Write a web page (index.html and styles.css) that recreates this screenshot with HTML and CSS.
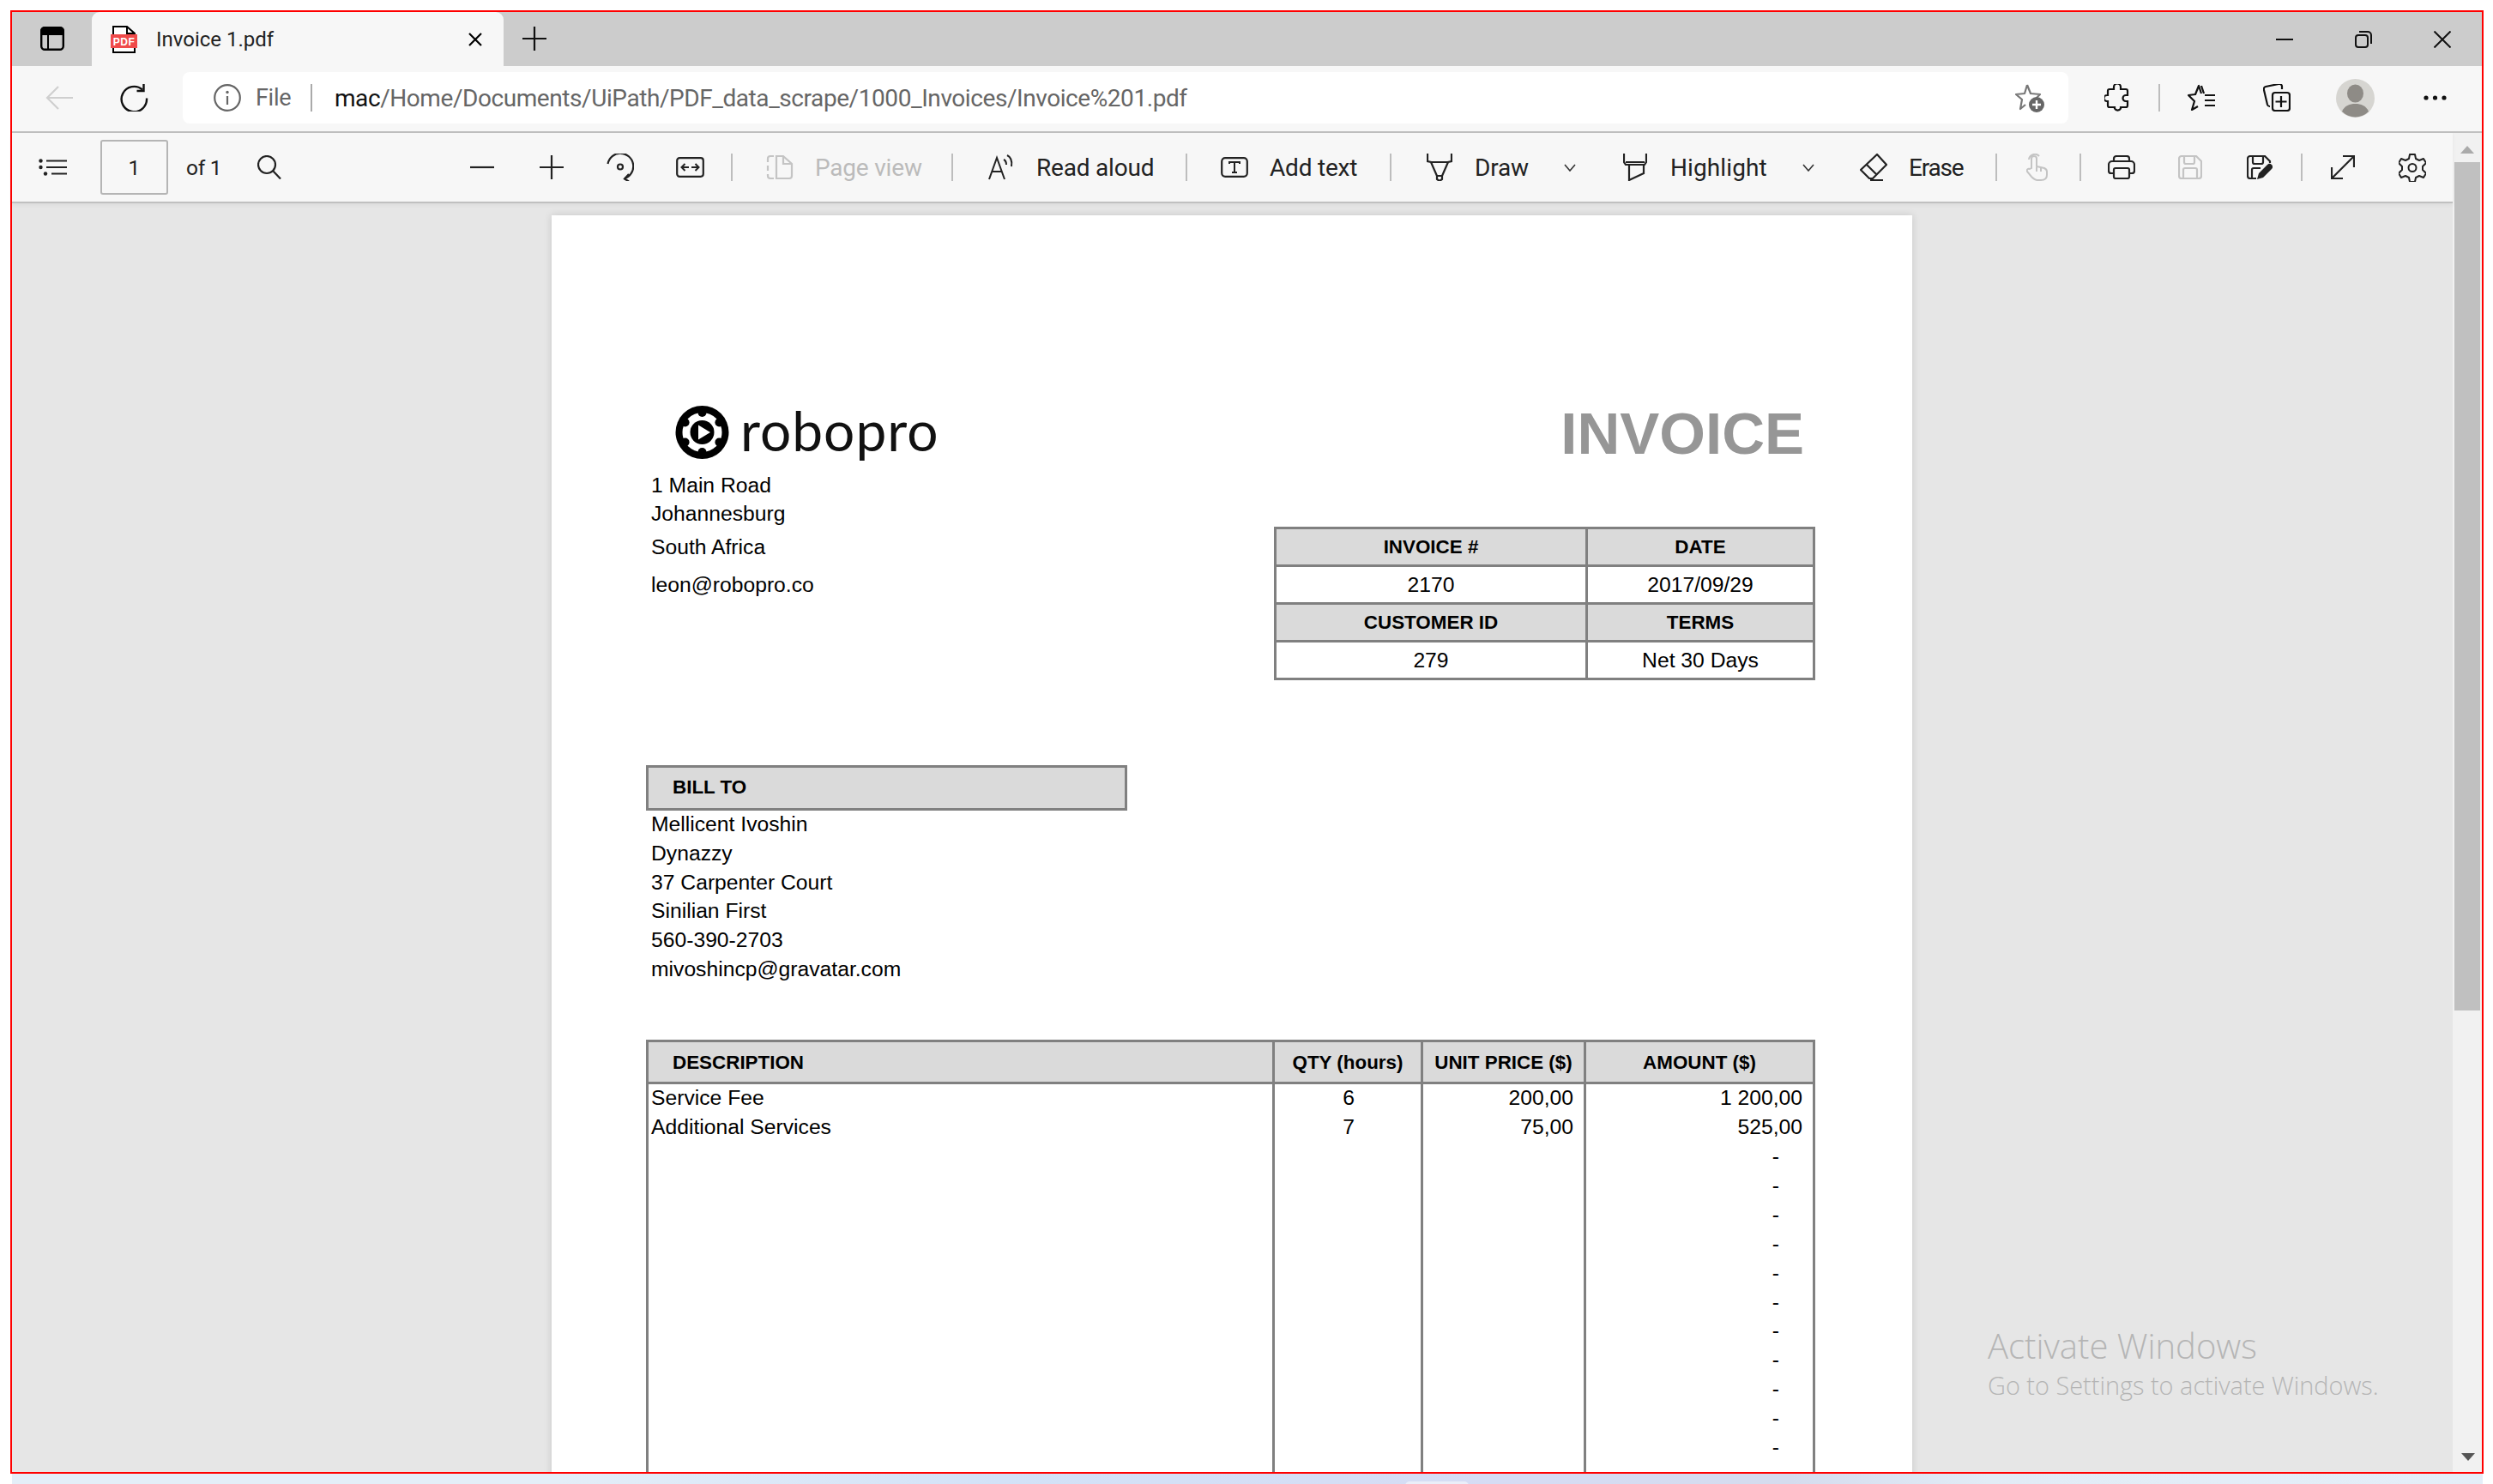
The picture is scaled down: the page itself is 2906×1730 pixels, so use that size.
FILE: index.html
```html
<!DOCTYPE html>
<html lang="en">
<head>
    <meta charset="UTF-8">
    <title>Invoice 1.pdf</title>
    <link rel="stylesheet" href="styles.css">
</head>
<body>

<div class="frame">

    <!-- tab strip -->
    <div class="tabstrip">
        <svg class="ic-vtabs" width="28" height="28" viewBox="0 0 28 28"><rect x="1.2" y="1.2" width="25.6" height="25.6" rx="4" fill="none" stroke="#000" stroke-width="2.4"/><path d="M1 5a4 4 0 0 1 4-4h18a4 4 0 0 1 4 4v4H1zM9 8v19" fill="#000" stroke="#000" stroke-width="2"/></svg>
        <div class="tab">
            <svg class="ic-pdf" width="31" height="32" viewBox="0 0 31 32"><path d="M3 1h16l9 8v22H3z" fill="#fff" stroke="#000" stroke-width="2"/><path d="M19 1v8h9" fill="none" stroke="#000" stroke-width="2"/><rect x="0" y="10" width="31" height="16" fill="#f04a4a"/><text x="15.5" y="22.5" class="pdf-word">PDF</text></svg>
            <span class="tab-title">Invoice 1.pdf</span>
            <svg class="ic-tabclose" width="16" height="16" viewBox="0 0 16 16"><path d="M1 1l14 14M15 1L1 15" stroke="#000" stroke-width="2.2" fill="none"/></svg>
        </div>
        <svg class="ic-newtab" width="28" height="28" viewBox="0 0 28 28"><path d="M14 0v28M0 14h28" stroke="#111" stroke-width="2.2"/></svg>
        <div class="winctl">
            <svg width="20" height="20" viewBox="0 0 20 20"><path d="M0 10h20" stroke="#111" stroke-width="2"/></svg>
            <svg width="20" height="20" viewBox="0 0 20 20"><rect x="1" y="5" width="14" height="14" rx="3" fill="none" stroke="#111" stroke-width="2"/><path d="M5 1h10a4 4 0 0 1 4 4v10" fill="none" stroke="#111" stroke-width="2"/></svg>
            <svg width="20" height="20" viewBox="0 0 20 20"><path d="M0.5 0.5l19 19M19.5 0.5l-19 19" stroke="#111" stroke-width="2" fill="none"/></svg>
        </div>
    </div>

    <!-- address row -->
    <div class="navbar">
        <svg class="ic-back" width="32" height="28" viewBox="0 0 32 28"><path d="M32 14H2M15 1L2 14l13 13" fill="none" stroke="#cfcfcf" stroke-width="2.2"/></svg>
        <svg class="ic-reload" width="33" height="32" viewBox="0 0 33 32"><path d="M26 6.5A14.7 14.7 0 1 0 31 16.500" fill="none" stroke="#111" stroke-width="2.4"/><path d="M27.500 0v8h-8" fill="none" stroke="#111" stroke-width="2.400"/></svg>
        <div class="addressbar">
            <svg class="ic-info" width="32" height="32" viewBox="0 0 32 32"><circle cx="16" cy="16" r="14.800" fill="none" stroke="#666" stroke-width="2.200"/><path d="M16 14v10" stroke="#666" stroke-width="2.200"/><circle cx="16" cy="9.500" r="1.700" fill="#666"/></svg>
            <span class="addr-file">File</span>
            <span class="addr-sep"></span>
            <span class="addr-url"><span class="addr-host">mac</span>/Home/Documents/UiPath/PDF_data_scrape/1000_Invoices/Invoice%201.pdf</span>
            <svg class="ic-staradd" width="34" height="34" viewBox="0 0 34 34"><path d="M14 2l4 10 11 1-6 6M12 25l-6 5 2-11-7-6 10-1 3-10" fill="none" stroke="#777" stroke-width="2.200" stroke-linejoin="round"/><circle cx="25" cy="25" r="9" fill="#666"/><path d="M25 20v10M20 25h10" stroke="#fff" stroke-width="2.400"/></svg>
        </div>
        <svg class="ic-puzzle" width="30" height="32" viewBox="0 0 30 32"><path d="M11 3.500a4 4 0 0 1 8 0V6h6a2 2 0 0 1 2 2v5h-2a3.500 3.500 0 0 0 0 7h2v5a2 2 0 0 1-2 2h-6v1.500a4 4 0 0 1-7 0V27H6a2 2 0 0 1-2-2v-5H3a3.500 3.500 0 0 1 0-7h1V8a2 2 0 0 1 2-2h5z" fill="none" stroke="#111" stroke-width="2.200"/></svg>
        <span class="nav-sep"></span>
        <svg class="ic-favlist" width="32" height="32" viewBox="0 0 32 32"><path d="M16 11l-3-9-4 10-8 1 7 7-3 10 7-4M16 2l3 9" fill="none" stroke="#111" stroke-width="2.200" stroke-linejoin="round"/><path d="M20 13h12M20 19h12M20 25h12" stroke="#111" stroke-width="2.200"/></svg>
        <svg class="ic-collect" width="32" height="32" viewBox="0 0 32 32"><path d="M8 26a3 3 0 0 1-3-2L1 7a3 3 0 0 1 2-4l15-3a3 3 0 0 1 4 3v3" fill="none" stroke="#111" stroke-width="2.200"/><rect x="11" y="10" width="20" height="21" rx="3" fill="none" stroke="#111" stroke-width="2.200"/><path d="M21 14v13M14.500 20.500h13" stroke="#111" stroke-width="2.200"/></svg>
        <svg class="ic-avatar" width="45" height="45" viewBox="0 0 45 45"><ellipse cx="22.500" cy="22.500" rx="22.500" ry="22.500" fill="#d6d5d1"/><ellipse cx="22.500" cy="17" rx="9.500" ry="10.500" fill="#8e8b86"/><path d="M7 38c3-7 9-9 15.500-9S35 31 38 38a22 22 0 0 1-31 0z" fill="#8e8b86"/></svg>
        <svg class="ic-dots" width="27" height="6" viewBox="0 0 27 6"><circle cx="3" cy="3" r="2.600" fill="#111"/><circle cx="13.500" cy="3" r="2.600" fill="#111"/><circle cx="24" cy="3" r="2.600" fill="#111"/></svg>
    </div>

    <div class="workspace">
        <div class="viewer-col">

            <!-- pdf toolbar -->
            <div class="pdfbar">
                <svg width="33" height="20" viewBox="0 0 33 20"><circle cx="2.500" cy="2.500" r="2.200" fill="#222"/><circle cx="2.500" cy="10" r="2.200" fill="#222"/><circle cx="8" cy="17.500" r="2.200" fill="#222"/><path d="M9 2.500h24M9 10h24M15 17.500h18" stroke="#222" stroke-width="2.200"/></svg>
                <div class="page-input">1</div>
                <span class="tb-text tb-of">of 1</span>
                <svg width="28" height="28" viewBox="0 0 28 28"><circle cx="11" cy="11" r="10" fill="none" stroke="#222" stroke-width="2.200"/><path d="M18 18l9 9.500" stroke="#222" stroke-width="2.200"/></svg>
                <svg width="32" height="28" viewBox="0 0 32 28"><path d="M2 14h28" stroke="#222" stroke-width="2.200"/></svg>
                <svg width="32" height="28" viewBox="0 0 32 28"><path d="M2 14h28M16 0v28" stroke="#222" stroke-width="2.200"/></svg>
                <svg width="32" height="32" viewBox="0 0 32 32"><path d="M1.500 12A15 15 0 1 1 21 29" fill="none" stroke="#222" stroke-width="2.200"/><path d="M26 24l-5 5.500 5 3" fill="none" stroke="#222" stroke-width="2.200"/><circle cx="16" cy="15.500" r="3" fill="none" stroke="#222" stroke-width="2.200"/></svg>
                <svg width="33" height="24" viewBox="0 0 33 24"><rect x="1.200" y="1.200" width="30.600" height="21.600" rx="3" fill="none" stroke="#222" stroke-width="2.200"/><path d="M7 12h8M10.500 8l-4 4 4 4M18 12h8M22.500 8l4 4-4 4" fill="none" stroke="#222" stroke-width="2"/></svg>
                <span class="tb-sep"></span>
                <svg width="32" height="32" viewBox="0 0 32 32"><path d="M12 3h8l10 9v14a3 3 0 0 1-3 3H12zM20 3v9h10" fill="none" stroke="#c4c4c4" stroke-width="2.200"/><path d="M9 3H5a3 3 0 0 0-3 3v4M2 14v6M2 24v2a3 3 0 0 0 3 3h4" fill="none" stroke="#c4c4c4" stroke-width="2.200"/></svg>
                <span class="tb-text tb-off">Page view</span>
                <span class="tb-sep"></span>
                <svg width="32" height="32" viewBox="0 0 32 32"><path d="M1 30L10 5l9 25M4.500 21h11" fill="none" stroke="#222" stroke-width="2"/><path d="M18 7c2 1 3 3 3 6M22 2c4 2 6 7 5 13" fill="none" stroke="#222" stroke-width="2"/></svg>
                <span class="tb-text">Read aloud</span>
                <span class="tb-sep"></span>
                <svg width="32" height="24" viewBox="0 0 32 24"><rect x="1.200" y="1.200" width="29.600" height="21.600" rx="4" fill="none" stroke="#222" stroke-width="2.200"/><path d="M10 8V6h12v2M16 6v12M13 18h6" fill="none" stroke="#222" stroke-width="2"/></svg>
                <span class="tb-text">Add text</span>
                <span class="tb-sep"></span>
                <svg width="30" height="32" viewBox="0 0 30 32"><path d="M1 0v9l4 1 7 16v4l3 2 3-2v-4l7-16 4-1V0M5 10h20M12 26h6" fill="none" stroke="#222" stroke-width="2.200"/></svg>
                <span class="tb-text">Draw</span>
                <svg class="chev" width="14" height="9" viewBox="0 0 14 9"><path d="M1 1l6 7 6-7" fill="none" stroke="#333" stroke-width="1.600"/></svg>
                <svg width="28" height="32" viewBox="0 0 28 32"><path d="M1 0v10l2 3h22l2-3V0M3 10h22M7 13v18l17-8V13" fill="none" stroke="#222" stroke-width="2.200"/></svg>
                <span class="tb-text tb-wide">Highlight</span>
                <svg class="chev" width="14" height="9" viewBox="0 0 14 9"><path d="M1 1l6 7 6-7" fill="none" stroke="#333" stroke-width="1.600"/></svg>
                <svg width="32" height="32" viewBox="0 0 32 32"><path d="M20 1l11 12-16 16H11L1 19zM7 12l13 13M12 31h15" fill="none" stroke="#222" stroke-width="2.200" stroke-linejoin="round"/></svg>
                <span class="tb-text tb-tight">Erase</span>
                <span class="tb-sep"></span>
                <svg width="25" height="32" viewBox="0 0 25 32"><path d="M6 17V6a3 3 0 0 1 6 0v9l9 2c2 1 3 2 3 4v4c0 4-3 6-7 6h-4c-3 0-5-2-7-4l-5-6c-1-2 1-4 3-3zM12 16v5M17 17v4M3 7a7 7 0 0 1 12-4" fill="none" stroke="#c4c4c4" stroke-width="2"/></svg>
                <span class="tb-sep"></span>
                <svg width="32" height="28" viewBox="0 0 32 28"><path d="M7 7V4a3 3 0 0 1 3-3h12a3 3 0 0 1 3 3v3M7 21H4a3 3 0 0 1-3-3v-7a4 4 0 0 1 4-4h22a4 4 0 0 1 4 4v7a3 3 0 0 1-3 3h-3" fill="none" stroke="#222" stroke-width="2.200"/><rect x="7" y="15" width="18" height="12" rx="2" fill="none" stroke="#222" stroke-width="2.200"/></svg>
                <svg width="28" height="28" viewBox="0 0 28 28"><path d="M1 4a3 3 0 0 1 3-3h17l6 6v17a3 3 0 0 1-3 3H4a3 3 0 0 1-3-3zM7 1v7a2 2 0 0 0 2 2h8a2 2 0 0 0 2-2V1M6 27V17a2 2 0 0 1 2-2h12a2 2 0 0 1 2 2v10" fill="none" stroke="#c4c4c4" stroke-width="2.200"/></svg>
                <svg width="30" height="28" viewBox="0 0 30 28"><path d="M11 27H4a3 3 0 0 1-3-3V4a3 3 0 0 1 3-3h17l6 6v2M7 1v7a2 2 0 0 0 2 2h8a2 2 0 0 0 2-2V1M6 27V17a2 2 0 0 1 2-2h8" fill="none" stroke="#222" stroke-width="2.200"/><path d="M12 28l2-7 10-10a3 3 0 0 1 5 5L19 26z" fill="#222"/></svg>
                <span class="tb-sep"></span>
                <svg width="28" height="28" viewBox="0 0 28 28"><path d="M1 27L27 1M14 1h13v13M14 27H1V14" fill="none" stroke="#222" stroke-width="2.200"/></svg>
                <svg width="32" height="33" viewBox="0 0 32 33"><path d="M13 1h6l1 5 4 2 5-2 3 5-4 4v4l4 4-3 5-5-2-4 2-1 5h-6l-1-5-4-2-5 2-3-5 4-4v-4L0 11l3-5 5 2 4-2z" fill="none" stroke="#222" stroke-width="2" stroke-linejoin="round"/><circle cx="16" cy="16.500" r="4.500" fill="none" stroke="#222" stroke-width="2"/></svg>
            </div>

            <!-- the document -->
            <div class="viewer">
                <div class="page">
                    <div class="doc-head">
                        <div class="seller">
                            <div class="logo">
                                <svg width="63" height="62" viewBox="0 0 63 62">
                                    <circle cx="31.500" cy="31" r="31" fill="#000"/>
                                    <circle cx="31.500" cy="31" r="23" fill="#fff"/>
                                    <circle cx="31.500" cy="8" r="5" fill="#000"/>
                                    <circle cx="31.500" cy="54" r="5" fill="#000"/>
                                    <circle cx="11.600" cy="19.500" r="5" fill="#000"/>
                                    <circle cx="51.400" cy="19.500" r="5" fill="#000"/>
                                    <circle cx="11.600" cy="42.500" r="5" fill="#000"/>
                                    <circle cx="51.400" cy="42.500" r="5" fill="#000"/>
                                    <circle cx="31.500" cy="31" r="14" fill="#000"/>
                                    <path d="M27 22.500L41 31l-14 8.500z" fill="#fff"/>
                                </svg>
                                <span class="logo-word">robopro</span>
                            </div>
                            <p class="addr-line">1 Main Road</p>
                            <p class="addr-line city">Johannesburg</p>
                            <p class="addr-line country">South Africa</p>
                            <p class="addr-line mail">leon@robopro.co</p>
                        </div>
                        <div class="doc-meta">
                            <h1>INVOICE</h1>
                            <table class="meta-table">
                                <tr><th>INVOICE #</th><th>DATE</th></tr>
                                <tr><td>2170</td><td>2017/09/29</td></tr>
                                <tr><th>CUSTOMER ID</th><th>TERMS</th></tr>
                                <tr><td>279</td><td>Net 30 Days</td></tr>
                            </table>
                        </div>
                    </div>

                    <div class="bill">
                        <div class="bill-head">BILL TO</div>
                        <p>Mellicent Ivoshin</p>
                        <p>Dynazzy</p>
                        <p>37 Carpenter Court</p>
                        <p>Sinilian First</p>
                        <p>560-390-2703</p>
                        <p>mivoshincp@gravatar.com</p>
                    </div>

                    <table class="items">
                        <colgroup>
                            <col class="c-desc"><col class="c-qty"><col class="c-price"><col class="c-amount">
                        </colgroup>
                        <tr>
                            <th class="th-desc">DESCRIPTION</th>
                            <th>QTY (hours)</th>
                            <th>UNIT PRICE ($)</th>
                            <th>AMOUNT ($)</th>
                        </tr>
                        <tr><td>Service Fee</td><td class="qty">6</td><td class="num">200,00</td><td class="num">1 200,00</td></tr>
                        <tr><td>Additional Services</td><td class="qty">7</td><td class="num">75,00</td><td class="num">525,00</td></tr>
                        <tr><td></td><td></td><td></td><td class="dash">-</td></tr>
                        <tr><td></td><td></td><td></td><td class="dash">-</td></tr>
                        <tr><td></td><td></td><td></td><td class="dash">-</td></tr>
                        <tr><td></td><td></td><td></td><td class="dash">-</td></tr>
                        <tr><td></td><td></td><td></td><td class="dash">-</td></tr>
                        <tr><td></td><td></td><td></td><td class="dash">-</td></tr>
                        <tr><td></td><td></td><td></td><td class="dash">-</td></tr>
                        <tr><td></td><td></td><td></td><td class="dash">-</td></tr>
                        <tr><td></td><td></td><td></td><td class="dash">-</td></tr>
                        <tr><td></td><td></td><td></td><td class="dash">-</td></tr>
                        <tr><td></td><td></td><td></td><td class="dash">-</td></tr>
                        <tr><td></td><td></td><td></td><td class="dash"></td></tr>
                    </table>
                </div>

                <div class="activate">
                    <div class="activate-title">Activate Windows</div>
                    <div class="activate-sub">Go to Settings to activate Windows.</div>
                </div>
            </div>
        </div>

        <div class="scrollbar">
            <span class="arrow-up"></span>
            <div class="thumb"></div>
            <span class="arrow-down"></span>
        </div>
    </div>
</div>

<div class="desktop-strip"><span class="desktop-notch"></span></div>

</body>
</html>
```

FILE: styles.css
```css
* {
    margin: 0;
    padding: 0;
    box-sizing: border-box;
}

html, body {
    height: 1730px;
    overflow: hidden;
    background: #fff;
}

body {
    padding: 12px 0 0 12px;
    font-family: "Roboto", "Liberation Sans", sans-serif;
    color: #222;
}

svg {
    display: block;
    flex: none;
}

.frame {
    width: 2883px;
    height: 1706px;
    border: 2px solid #f00;
    display: flex;
    flex-direction: column;
    background: #f7f7f7;
}

/* tab strip */
.tabstrip {
    height: 63px;
    background: #ccc;
    display: flex;
    align-items: center;
    padding-left: 33px;
    flex: none;
}

.ic-vtabs {
    margin-top: -2px;
}

.tab {
    width: 480px;
    height: 63px;
    margin-left: 32px;
    background: #f7f7f7;
    border-radius: 9px 9px 0 0;
    display: flex;
    align-items: center;
    padding-left: 22px;
}

.pdf-word {
    font: bold 12px "Liberation Sans", sans-serif;
    fill: #fff;
    text-anchor: middle;
    letter-spacing: 0.5px;
}

.tab-title {
    margin-left: 22px;
    width: 364px;
    font-size: 24px;
    color: #222;
}

.ic-tabclose {
    margin-top: 1px;
}

.ic-newtab {
    margin-left: 22px;
    margin-top: -2px;
}

.winctl {
    margin-left: auto;
    padding-right: 36px;
    display: flex;
    gap: 72px;
}

/* address row */
.navbar {
    height: 78px;
    flex: none;
    border-bottom: 2px solid #c0c0c0;
    display: flex;
    align-items: center;
    padding: 0 0 2px 39px;
}

.ic-back {
    margin-right: 55px;
}

.addressbar {
    width: 2198px;
    height: 60px;
    margin-left: 40px;
    background: #fff;
    border-radius: 8px;
    display: flex;
    align-items: center;
    padding-left: 36px;
}

.addr-file {
    margin-left: 17px;
    width: 40px;
    font-size: 27px;
    color: #666;
    letter-spacing: -0.3px;
}

.addr-sep {
    width: 2px;
    height: 32px;
    margin-left: 24px;
    background: #aaa;
}

.addr-url {
    margin-left: 26px;
    font-size: 28px;
    color: #666;
    letter-spacing: -0.43px;
    white-space: nowrap;
}

.addr-host {
    color: #111;
}

.ic-staradd {
    margin-left: auto;
    margin-right: 28px;
}

.ic-puzzle {
    margin-left: 42px;
}

.nav-sep {
    width: 2px;
    height: 32px;
    margin-left: 33px;
    background: #bdbdbd;
}

.ic-favlist {
    margin-left: 32px;
}

.ic-collect {
    margin-left: 56px;
}

.ic-avatar {
    margin-left: 53px;
}

.ic-dots {
    margin-left: 57px;
}

/* toolbar + document + scrollbar */
.workspace {
    flex: 1;
    display: flex;
    min-height: 0;
}

.viewer-col {
    flex: 1;
    min-width: 0;
    display: flex;
    flex-direction: column;
}

.pdfbar {
    height: 82px;
    flex: none;
    border-bottom: 2px solid #c0c0c0;
    display: grid;
    grid-template-columns: 72px 100px 83px 246px 81px 80px 81px 64px 41px 57px 159px 43px 56px 174px 41px 57px 140px 43px 56px 104px 69px 55px 154px 67px 57px 101px 36px 62px 33px 82px 80px 63px 35px 79px auto;
    align-items: center;
    padding-left: 31px;
    position: relative;
    z-index: 2;
    box-shadow: 0 2px 5px rgba(0, 0, 0, 0.05);
}

.page-input {
    width: 79px;
    height: 64px;
    border: 2px solid #b5b5b5;
    border-radius: 3px;
    background: #f7f7f7;
    display: flex;
    align-items: center;
    justify-content: center;
    font-size: 24.500px;
}

.tb-text {
    font-size: 28px;
    color: #222;
    white-space: nowrap;
    letter-spacing: -0.2px;
}

.tb-of {
    font-size: 24.500px;
    letter-spacing: -0.3px;
}

.tb-wide {
    letter-spacing: 0.1px;
}

.tb-tight {
    letter-spacing: -1.2px;
}

.tb-off {
    color: #bbb;
}

.tb-sep {
    width: 2px;
    height: 32px;
    background: #bdbdbd;
}

.viewer {
    flex: 1;
    min-height: 0;
    overflow: hidden;
    position: relative;
    background: #e6e6e6;
    padding: 14px 0 0 629px;
}

.scrollbar {
    width: 34px;
    flex: none;
    background: #f1f1f1;
    display: flex;
    flex-direction: column;
    align-items: center;
    padding-top: 15px;
    position: relative;
}

.arrow-up {
    width: 0;
    height: 0;
    border-left: 8px solid transparent;
    border-right: 8px solid transparent;
    border-bottom: 9px solid #aaa;
}

.thumb {
    width: 30px;
    height: 989px;
    margin-top: 10px;
    background: #c0c0c0;
}

.arrow-down {
    position: absolute;
    bottom: 13px;
    left: 10px;
    width: 0;
    height: 0;
    border-left: 8px solid transparent;
    border-right: 8px solid transparent;
    border-top: 9px solid #555;
}

/* pdf page */
.page {
    width: 1586px;
    height: 1600px;
    background: #fff;
    box-shadow: 0 0 9px rgba(0, 0, 0, 0.14);
    font-family: "Liberation Sans", Arial, sans-serif;
    font-size: 24.700px;
    color: #000;
    padding-left: 110px;
}

.doc-head {
    display: flex;
    justify-content: space-between;
    width: 1363px;
}

.seller {
    padding: 222px 0 0 6px;
}

.logo {
    display: flex;
    align-items: center;
    margin-left: 28px;
    height: 62px;
    margin-bottom: 14px;
}

.logo-word {
    margin-left: 13px;
    margin-top: -4px;
    font-family: "Lato", sans-serif;
    font-size: 64px;
    line-height: 62px;
    letter-spacing: 1px;
    color: #111;
}

.addr-line {
    line-height: 34px;
}

.city {
    margin-top: -1px;
}

.country {
    margin-top: 5px;
}

.mail {
    margin-top: 10px;
}

.doc-meta {
    padding-top: 220px;
    width: 631px;
}

h1 {
    font-size: 69px;
    line-height: 70px;
    color: #969696;
    text-align: right;
    padding-right: 13px;
    margin-bottom: 73px;
}

.meta-table {
    width: 631px;
    table-layout: fixed;
    border-collapse: collapse;
}

.meta-table th,
.meta-table td {
    border: 3px solid #808080;
    height: 44px;
    text-align: center;
    vertical-align: middle;
}

.meta-table th:first-child,
.meta-table td:first-child {
    width: 363px;
}

.meta-table th {
    background: #dadada;
    font-size: 22.400px;
}

.bill {
    margin-top: 99px;
}

.bill-head {
    width: 561px;
    height: 53px;
    background: #dadada;
    border: 3px solid #808080;
    font-size: 22.400px;
    font-weight: bold;
    line-height: 45px;
    padding-left: 28px;
    margin-bottom: -1px;
}

.bill p {
    line-height: 33.800px;
    padding-left: 6px;
}

.items {
    margin-top: 65px;
    width: 1360px;
    table-layout: fixed;
    border-collapse: collapse;
}

.c-desc {
    width: 730px;
}

.c-qty {
    width: 173px;
}

.c-price {
    width: 190px;
}

.c-amount {
    width: 267px;
}

.items th {
    height: 49px;
    padding-top: 2px;
    background: #dadada;
    border: 3px solid #808080;
    font-size: 22.400px;
    text-align: center;
    white-space: nowrap;
}

.items .th-desc {
    text-align: left;
    padding-left: 28px;
}

.items td {
    height: 33.900px;
    line-height: 29px;
    padding: 1.500px 0 3.400px 3px;
    border-left: 3px solid #808080;
    border-right: 3px solid #808080;
}

.items .qty {
    text-align: center;
    padding-left: 2px;
}

.items .num {
    text-align: right;
    padding-right: 12px;
}

.items .dash {
    text-align: right;
    padding-right: 39px;
}

/* windows watermark */
.activate {
    position: absolute;
    left: 2303px;
    top: 1307px;
    font-family: "Open Sans", sans-serif;
    color: #b5b5b5;
    font-weight: 300;
    white-space: nowrap;
}

.activate-title {
    font-size: 40px;
    line-height: 50px;
}

.activate-sub {
    font-size: 28.900px;
    line-height: 42px;
}

/* bit of desktop under the window */
.desktop-strip {
    width: 2880px;
    height: 12px;
    margin-left: 2px;
    position: relative;
    overflow: hidden;
    background: linear-gradient(90deg, #e4eef8 0, #e4eef8 22%, #d3e2f7 40%, #d6dcf4 60%, #d5dcee 72%, #e2ecf6 80%, #e4eef8 100%);
}

.desktop-notch {
    position: absolute;
    left: 1624px;
    top: 9px;
    width: 74px;
    height: 10px;
    background: #ebeef9;
    border-radius: 5px 5px 0 0;
}
```
